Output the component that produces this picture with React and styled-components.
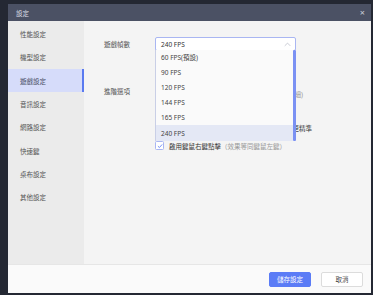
import React, { useState } from "react";
import styled, { createGlobalStyle } from "styled-components";

const GlobalStyle = createGlobalStyle`
  html, body {
    margin: 0;
    padding: 0;
    background: #242833;
    font-family: "Noto Sans", "Noto Sans CJK TC", sans-serif;
  }
`;

const Dialog = styled.div`
  margin: 4px 2px 2px 8px;
  width: 363px;
  height: 289px;
  display: flex;
  flex-direction: column;
  background: #f4f4f4;
  overflow: hidden;
`;

const Header = styled.div`
  height: 17px;
  flex: none;
  display: flex;
  align-items: center;
  justify-content: space-between;
  padding: 0 6px 0 8px;
  background: #4b5164;
  color: #d9dce4;
  font-size: 6.5px;
`;

const Close = styled.span`
  font-size: 9px;
  color: #c9ccd6;
  line-height: 1;
`;

const Body = styled.div`
  flex: 1;
  display: flex;
  min-height: 0;
`;

const Sidebar = styled.div`
  width: 76px;
  flex: none;
  background: #ebebeb;
  padding-top: 1.5px;
`;

const NavItem = styled.div`
  height: 23.3px;
  display: flex;
  align-items: center;
  padding-left: 12px;
  font-size: 6.5px;
  color: ${(p) => (p.$active ? "#4a4f66" : "#555")};
  background: ${(p) => (p.$active ? "#d6dcfa" : "transparent")};
  box-shadow: ${(p) => (p.$active ? "inset -2px 0 0 #5a7af0" : "none")};
`;

const Content = styled.div`
  flex: 1;
  padding: 16px 0 0 20px;
  font-size: 6.5px;
  color: #444;
`;

const Row = styled.div`
  display: flex;
  align-items: ${(p) => p.$align || "center"};
  margin-top: ${(p) => p.$mt || 0}px;
`;

const Label = styled.div`
  width: 51px;
  flex: none;
  color: #555;
  padding-top: ${(p) => p.$pt || 0}px;
`;

const SelectWrap = styled.div`
  position: relative;
  width: 141px;
`;

const SelectBox = styled.div`
  height: 12px;
  border: 0.8px solid #a9b6f2;
  border-radius: 2px;
  background: #fff;
  display: flex;
  align-items: center;
  justify-content: space-between;
  padding: 0 4px 0 5px;
  color: #333;
`;

const Menu = styled.div`
  position: absolute;
  left: 0;
  top: 12.5px;
  width: 141px;
  background: #fafafa;
  border-left: 1px solid #c9cfe6;
  box-sizing: border-box;
  display: flex;
  z-index: 2;
`;

const MenuList = styled.div`
  flex: 1;
`;

const MenuItem = styled.div`
  height: 15.2px;
  display: flex;
  align-items: center;
  padding-left: 5px;
  color: #444;
  background: ${(p) => (p.$selected ? "#e4e8f5" : "transparent")};
`;

const Scrollbar = styled.div`
  width: 3px;
  background: #7b91f3;
  border-radius: 1px;
`;

const Options = styled.div`
  display: flex;
  flex-direction: column;
`;

const Option = styled.div`
  height: 17.3px;
  display: flex;
  align-items: center;
  gap: 5px;
  color: #333;
  white-space: nowrap;
`;

const Check = styled.span`
  width: 7px;
  height: 7px;
  flex: none;
  border: 0.8px solid #a9b6f2;
  border-radius: 1.5px;
  background: #fff;
  display: inline-flex;
  align-items: center;
  justify-content: center;
`;

const Hint = styled.span`
  color: #999;
`;

const Footer = styled.div`
  height: 29px;
  flex: none;
  background: #fafafa;
  border-top: 1px solid #e6e6e6;
  box-sizing: border-box;
  display: flex;
  align-items: center;
  justify-content: flex-end;
  gap: 10px;
  padding-right: 8px;
`;

const Button = styled.button`
  width: 42px;
  height: 15px;
  border-radius: 2px;
  font-family: inherit;
  font-size: 6.5px;
  padding: 0;
  border: 1px solid ${(p) => (p.$primary ? "#5b7cf6" : "#dcdcdc")};
  background: ${(p) => (p.$primary ? "#5b7cf6" : "#fff")};
  color: ${(p) => (p.$primary ? "#fff" : "#444")};
`;

const CheckMark = () => (
  <svg width="6" height="6" viewBox="0 0 10 10">
    <path d="M1.5 5.2 L4 7.6 L8.6 2.4" fill="none" stroke="#5b7cf6" strokeWidth="1.4" />
  </svg>
);

const nav = ["性能設定", "機型設定", "遊戲設定", "音訊設定", "網路設定", "快速鍵", "桌布設定", "其他設定"];
const fpsList = ["60 FPS(預設)", "90 FPS", "120 FPS", "144 FPS", "165 FPS", "240 FPS"];

export default function App() {
  const [fps] = useState("240 FPS");

  return (
    <>
      <GlobalStyle />
      <Dialog>
        <Header>
          <span>設定</span>
          <Close>×</Close>
        </Header>
        <Body>
          <Sidebar>
            {nav.map((n) => (
              <NavItem key={n} $active={n === "遊戲設定"}>
                {n}
              </NavItem>
            ))}
          </Sidebar>
          <Content>
            <Row>
              <Label>遊戲幀數</Label>
              <SelectWrap>
                <SelectBox>
                  <span>{fps}</span>
                  <svg width="7" height="5" viewBox="0 0 10 6">
                    <path d="M1 5 L5 1 L9 5" fill="none" stroke="#b5b8c4" strokeWidth="1" />
                  </svg>
                </SelectBox>
                <Menu>
                  <MenuList>
                    {fpsList.map((f) => (
                      <MenuItem key={f} $selected={f === fps}>
                        {f}
                      </MenuItem>
                    ))}
                  </MenuList>
                  <Scrollbar />
                </Menu>
              </SelectWrap>
            </Row>
            <Row $align="flex-start" $mt={34}>
              <Label $pt={1}>進階選項</Label>
              <Options>
                <Option>
                  <Check><CheckMark /></Check>
                  <span>
                    啟用高幀率模式<Hint>(需要較高硬體配置，請看詳細)</Hint>
                  </span>
                </Option>
                <Option>
                  <Check />
                  <span>啟用垂直同步減少畫面撕裂</span>
                </Option>
                <Option>
                  <Check><CheckMark /></Check>
                  <span>開啟滑鼠高精度模式，讓遊戲中瞄準與射擊更精準</span>
                </Option>
                <Option>
                  <Check><CheckMark /></Check>
                  <span>
                    啟用鍵鼠右鍵點擊<Hint>（效果等同鍵鼠左鍵）</Hint>
                  </span>
                </Option>
              </Options>
            </Row>
          </Content>
        </Body>
        <Footer>
          <Button $primary>儲存設定</Button>
          <Button>取消</Button>
        </Footer>
      </Dialog>
    </>
  );
}
